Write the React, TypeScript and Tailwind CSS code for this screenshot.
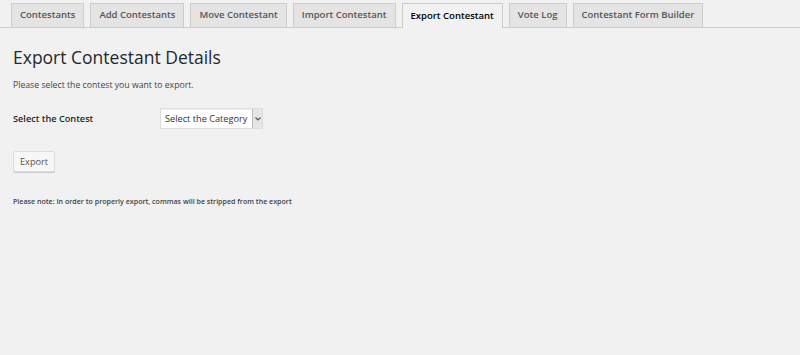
import React from "react";

const tabs = [
  "Contestants",
  "Add Contestants",
  "Move Contestant",
  "Import Contestant",
  "Export Contestant",
  "Vote Log",
  "Contestant Form Builder",
];

export default function App(): React.JSX.Element {
  const active = "Export Contestant";
  return (
    <div
      className="h-[355px] w-[800px] overflow-hidden bg-[#f1f1f1] text-[#444]"
      style={{ fontFamily: '"Open Sans", "Noto Sans", sans-serif' }}
    >
      <nav className="flex h-[28px] items-end gap-[6px] border-b border-[#ccc] pl-[11px]">
        {tabs.map((t) =>
          t === active ? (
            <div
              key={t}
              className="-mb-px flex h-[25px] items-center whitespace-nowrap border border-b-0 border-[#ccc] bg-[#f1f1f1] px-[8px] text-[9.5px] font-semibold text-black"
            >
              {t}
            </div>
          ) : (
            <div
              key={t}
              className="-mb-px flex h-[25px] items-center whitespace-nowrap border border-[#ccc] bg-[#e4e4e4] px-[8px] text-[9.5px] font-semibold text-[#555]"
            >
              {t}
            </div>
          )
        )}
      </nav>

      <div className="px-[13px]">
        <h1 className="mt-[17px] text-[17.5px] leading-[24px] text-[#23282d]">
          Export Contestant Details
        </h1>
        <p className="mt-[9px] text-[8.7px] leading-[14px] text-[#444]">
          Please select the contest you want to export.
        </p>

        <div className="mt-[16px] flex items-center">
          <label className="w-[147px] text-[9.2px] font-semibold text-[#23282d]">
            Select the Contest
          </label>
          <div className="flex h-[21px] items-center border border-[#ddd] bg-white pl-[4px] shadow-[inset_0_1px_2px_rgba(0,0,0,0.07)]">
            <span className="whitespace-nowrap text-[9.2px] text-[#333]">Select the Category</span>
            <span className="ml-[5px] flex h-[19px] w-[10px] items-center justify-center border-l border-[#bbb] bg-[#e6e6e6]">
              <svg width="6" height="4" viewBox="0 0 6 4">
                <path d="M0.5 0.5 L3 3 L5.5 0.5" fill="none" stroke="#555" strokeWidth="1.2" />
              </svg>
            </span>
          </div>
        </div>

        <button className="mt-[22px] flex h-[21px] items-center rounded-[2px] border border-[#ddd] bg-[#f7f7f7] px-[6px] text-[9.2px] text-[#555] shadow-[0_1px_0_#ccc]">
          Export
        </button>

        <p className="mt-[24px] whitespace-nowrap text-[7.1px] font-semibold text-[#444]">
          Please note: In order to properly export, commas will be stripped from the export
        </p>
      </div>
    </div>
  );
}
